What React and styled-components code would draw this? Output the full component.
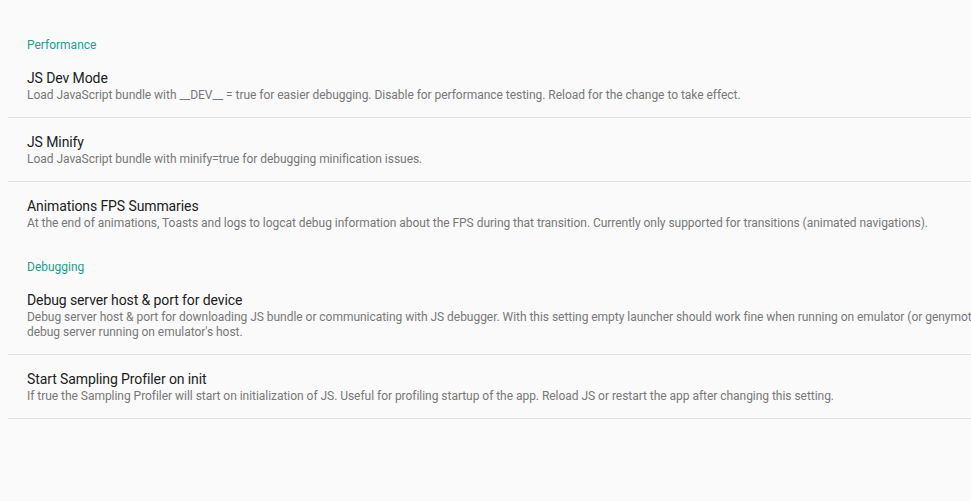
import React from "react";
import styled, { createGlobalStyle } from "styled-components";

const Global = createGlobalStyle`
  html, body { margin: 0; padding: 0; background: #fafafa; }
  body { font-family: Roboto, "Noto Sans", sans-serif; overflow: hidden; }
`;

const Screen = styled.div`
  width: 971px;
  height: 501px;
  overflow: hidden;
  background: #fafafa;
  display: flex;
  flex-direction: column;
`;

const Category = styled.div`
  padding: ${(p) => p.$top}px 0 0 27px;
  font-size: 12px;
  line-height: 17px;
  color: #1f9c8c;
`;

const Item = styled.div`
  margin-left: 8px;
  padding: 14px 0 14px 19px;
  border-bottom: ${(p) => (p.$divider ? "1px solid #e0e0e0" : "none")};
  display: flex;
  flex-direction: column;
  white-space: nowrap;
`;

const Title = styled.div`
  font-size: 14px;
  line-height: 20px;
  letter-spacing: -0.1px;
  color: #212121;
`;

const Summary = styled.div`
  font-size: 12px;
  line-height: 15px;
  letter-spacing: -0.035px;
  color: #787878;
`;

const sections = [
  {
    name: "Performance",
    top: 37,
    items: [
      {
        title: "JS Dev Mode",
        lines: [
          "Load JavaScript bundle with __DEV__ = true for easier debugging. Disable for performance testing. Reload for the change to take effect.",
        ],
        divider: true,
      },
      {
        title: "JS Minify",
        lines: ["Load JavaScript bundle with minify=true for debugging minification issues."],
        divider: true,
      },
      {
        title: "Animations FPS Summaries",
        lines: [
          "At the end of animations, Toasts and logs to logcat debug information about the FPS during that transition. Currently only supported for transitions (animated navigations).",
        ],
        divider: false,
      },
    ],
  },
  {
    name: "Debugging",
    top: 14,
    items: [
      {
        title: "Debug server host & port for device",
        lines: [
          "Debug server host & port for downloading JS bundle or communicating with JS debugger. With this setting empty launcher should work fine when running on emulator (or genymotion) and connection to",
          "debug server running on emulator's host.",
        ],
        divider: true,
      },
      {
        title: "Start Sampling Profiler on init",
        lines: [
          "If true the Sampling Profiler will start on initialization of JS. Useful for profiling startup of the app. Reload JS or restart the app after changing this setting.",
        ],
        divider: true,
      },
    ],
  },
];

export default function App() {
  return (
    <>
      <Global />
      <Screen>
        {sections.map((s) => (
          <React.Fragment key={s.name}>
            <Category $top={s.top}>{s.name}</Category>
            {s.items.map((it) => (
              <Item key={it.title} $divider={it.divider}>
                <Title>{it.title}</Title>
                {it.lines.map((l) => (
                  <Summary key={l}>{l}</Summary>
                ))}
              </Item>
            ))}
          </React.Fragment>
        ))}
      </Screen>
    </>
  );
}
